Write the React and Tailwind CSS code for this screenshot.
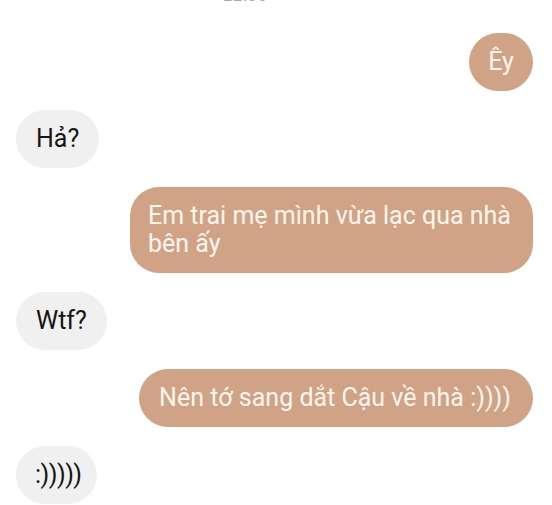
import React from "react";

function Sent({ children, className = "" }) {
  return (
    <div className="flex justify-end">
      <div
        className={
          "rounded-[29px] bg-[#d0a386] text-[#fdf6ee] text-[25px] leading-[28px] py-[15px] " +
          className
        }
      >
        {children}
      </div>
    </div>
  );
}

function Received({ children, className = "px-[20px]" }) {
  return (
    <div className="flex justify-start">
      <div
        className={
          "rounded-[29px] bg-[#f0f0f0] text-[#151515] text-[25px] leading-[28px] py-[15px] " +
          className
        }
      >
        {children}
      </div>
    </div>
  );
}

export default function App() {
  return (
    <div
      className="w-[552px] h-[505px] overflow-hidden bg-white flex flex-col pl-[16px] pr-[19px]"
      style={{ fontFamily: "Roboto, 'Noto Sans', sans-serif" }}
    >
      <div className="h-[5px] overflow-hidden flex items-end pl-[207px]">
        <div className="text-[16px] leading-[18px] text-[#a8a8a8] tracking-[1px]">22:30</div>
      </div>
      <div className="flex flex-col gap-[19px] mt-[28px]">
        <Sent className="px-[19px] min-w-[64px] text-center">Êy</Sent>
        <Received>Hả?</Received>
        <Sent className="pl-[18px] pr-[20px] max-w-[403px]">
          Em trai mẹ mình vừa lạc qua nhà bên ấy
        </Sent>
        <Received>Wtf?</Received>
        <Sent className="pl-[20px] pr-[22px]">Nên tớ sang dắt Cậu về nhà :))))</Sent>
        <Received className="pl-[19px] pr-[15px] tracking-[-0.5px]">:)))))</Received>
      </div>
    </div>
  );
}
